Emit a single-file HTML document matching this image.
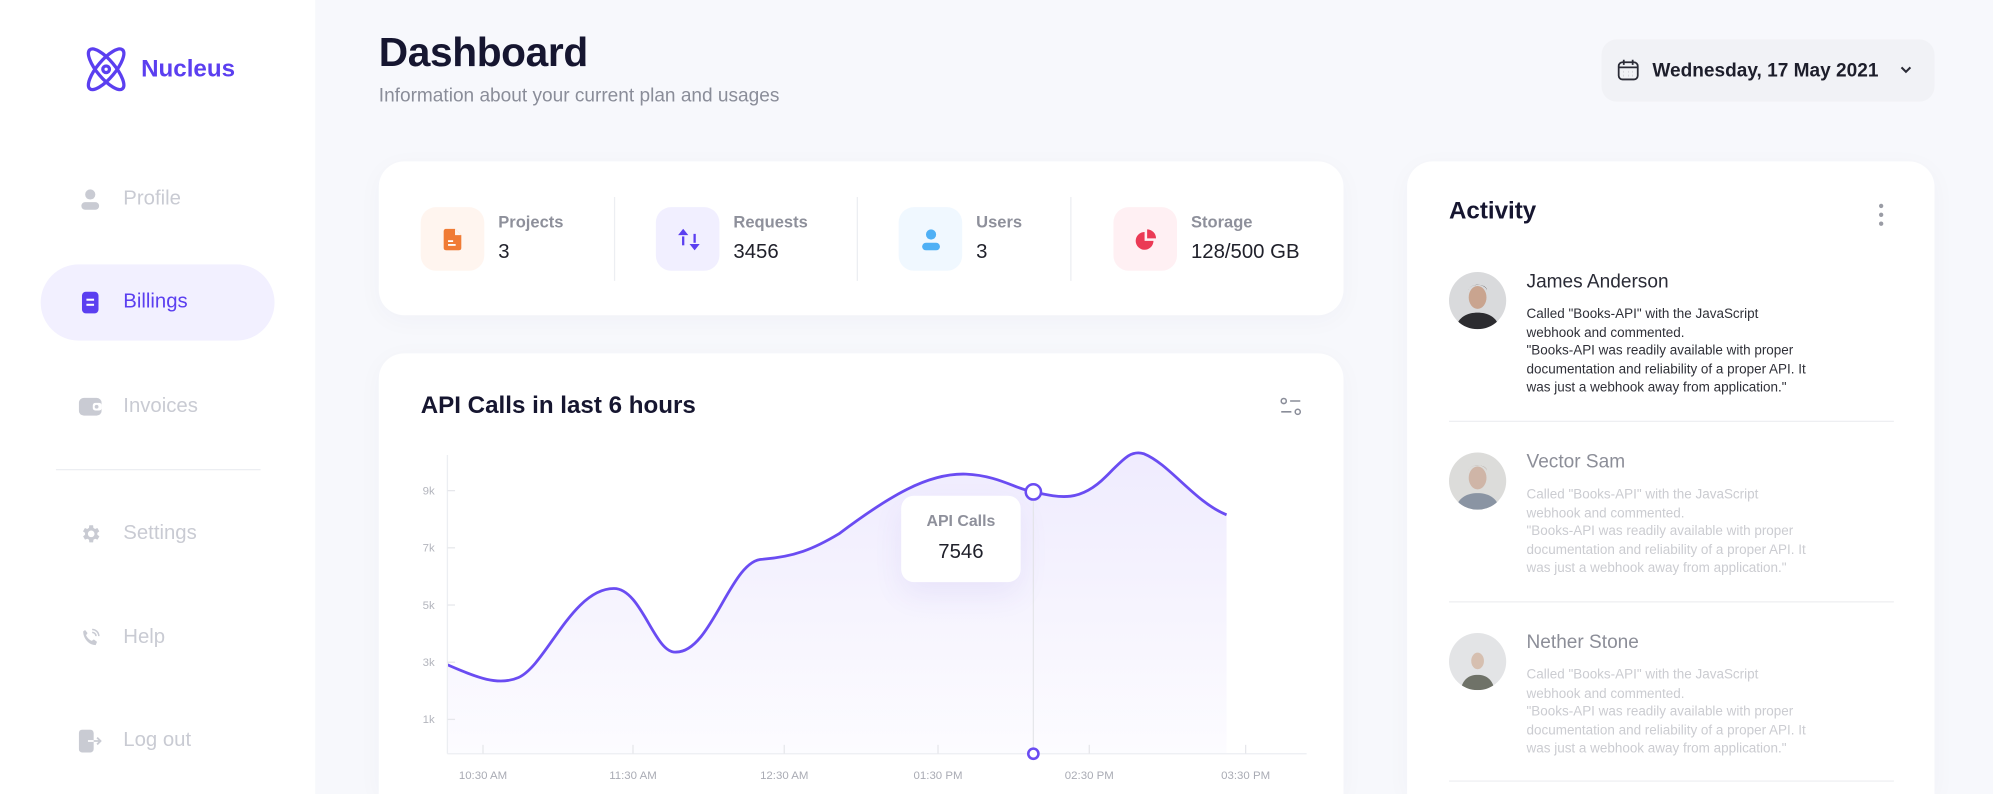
<!DOCTYPE html>
<html><head><meta charset="utf-8">
<style>
html,body{margin:0;padding:0;width:1993px;height:794px;overflow:hidden;background:#f7f8fc;font-family:"Liberation Sans",sans-serif;}
#w{position:absolute;left:0;top:0;width:1568px;height:625px;overflow:hidden;transform:scale(1.27105);transform-origin:0 0;background:#f7f8fc;}
.a{position:absolute;}
.side{left:0;top:0;width:248px;height:625px;background:#fff;}
.nav{position:absolute;left:97px;font-size:16px;color:#c9cbd3;transform:translateY(-50%);}
.ni{position:absolute;left:62px;width:18px;height:18px;transform:translateY(-50%);}
.card{position:absolute;background:#fff;border-radius:20px;box-shadow:0 4px 20px rgba(40,40,90,0.03);}
.lbl{position:absolute;font-size:13px;font-weight:bold;color:#8e909b;}
.val{position:absolute;font-size:16px;color:#20212b;}
.box{position:absolute;width:50px;height:50px;border-radius:12px;top:163px;}
.dv{position:absolute;width:1px;top:155px;height:66px;background:#eceef2;}
.yl{position:absolute;font-size:9px;color:#b3b5bd;right:1226px;transform:translateY(-50%);}
.xl{position:absolute;font-size:9px;color:#a9abb4;top:605px;transform:translateX(-50%);}
.nm{position:absolute;left:1201px;font-size:15px;color:#2a2b36;}
.tx{position:absolute;left:1201px;width:300px;font-size:10.6px;line-height:14.5px;color:#2f3038;white-space:nowrap;}
.fade{color:#cbccd1;}
.nmf{color:#8c8e98;}
.hr{position:absolute;left:1140px;width:350px;height:1px;background:#eeeff2;}
.av{position:absolute;left:1140px;width:45px;height:45px;border-radius:50%;overflow:hidden;}
</style></head><body>
<div id="w">
<div class="a side"></div>
<svg class="a" style="left:66px;top:37px" width="35" height="35" viewBox="0 0 35 35" fill="none" stroke="#5b3ff0" stroke-width="2.6">
<ellipse cx="17.5" cy="17.5" rx="7" ry="20" transform="rotate(-40 17.5 17.5)"/>
<ellipse cx="17.5" cy="17.5" rx="7" ry="20" transform="rotate(40 17.5 17.5)"/>
<circle cx="17.5" cy="17.5" r="2.6"/>
</svg>
<div class="a" style="left:111px;top:44px;font-size:19px;font-weight:bold;color:#5b3ff0">Nucleus</div>

<svg class="ni" style="top:157px" viewBox="0 0 18 18"><circle cx="9" cy="5" r="4" fill="#c9cbd3"/><rect x="2" y="11" width="14" height="6" rx="3" fill="#c9cbd3"/></svg>
<div class="nav" style="top:157px">Profile</div>
<div class="a" style="left:32px;top:208px;width:184px;height:60px;border-radius:30px;background:#f2f0ff"></div>
<svg class="ni" style="top:238px" viewBox="0 0 18 18"><rect x="2.5" y="0.5" width="13" height="17" rx="3" fill="#5b3ff0"/><rect x="6" y="6" width="6" height="1.6" fill="#fff"/><rect x="6" y="10" width="6" height="1.6" fill="#fff"/></svg>
<div class="nav" style="top:238px;color:#5b3ff0">Billings</div>
<svg class="ni" style="top:320px" viewBox="0 0 18 18"><rect x="0" y="2" width="18" height="14" rx="4" fill="#c9cbd3"/><rect x="11" y="6" width="7" height="6" rx="2" fill="#fff"/><circle cx="14" cy="9" r="1.5" fill="#c9cbd3"/></svg>
<div class="nav" style="top:320px">Invoices</div>
<div class="a" style="left:44px;top:369px;width:161px;height:1px;background:#eceef2"></div>
<svg class="ni" style="top:420px" viewBox="0 0 24 24"><path fill="#c9cbd3" d="M19.4 13a7.5 7.5 0 000-2l2.1-1.6-2-3.5-2.5 1a7.6 7.6 0 00-1.7-1L15 3h-4l-.4 2.9a7.6 7.6 0 00-1.7 1l-2.5-1-2 3.5L6.6 11a7.5 7.5 0 000 2l-2.1 1.6 2 3.5 2.5-1c.5.4 1.1.7 1.7 1L11 21h4l.4-2.9c.6-.3 1.2-.6 1.7-1l2.5 1 2-3.5zM13 15.5A3.5 3.5 0 1113 8.5a3.5 3.5 0 010 7z"/></svg>
<div class="nav" style="top:420px">Settings</div>
<svg class="ni" style="top:502px" viewBox="0 0 24 24"><path fill="#c9cbd3" d="M6.6 3.5l2.6 3.3-1.6 2.2a12 12 0 006 6l2.2-1.6 3.3 2.6-1.4 3.4C11 19.4 4.6 13 4.6 5z"/><path d="M14 3a7 7 0 017 7M14 6a4 4 0 014 4" stroke="#c9cbd3" stroke-width="1.6" fill="none"/></svg>
<div class="nav" style="top:502px">Help</div>
<svg class="ni" style="top:583px" viewBox="0 0 20 20"><rect x="0" y="0" width="13" height="20" rx="3" fill="#c9cbd3"/><path d="M8 10h11M16 7l3 3-3 3" stroke="#c9cbd3" stroke-width="1.6" fill="none"/><path d="M8 10h5" stroke="#fff" stroke-width="1.6"/></svg>
<div class="nav" style="top:583px">Log out</div>

<div class="a" style="left:298px;top:23px;font-size:32px;font-weight:bold;color:#161630;letter-spacing:-0.3px">Dashboard</div>
<div class="a" style="left:298px;top:67px;font-size:15px;color:#8a8d99">Information about your current plan and usages</div>
<div class="a" style="left:1260px;top:31px;width:262px;height:49px;border-radius:12px;background:#f1f2f6"></div>
<svg class="a" style="left:1272px;top:46px" width="18" height="18" viewBox="0 0 18 18" fill="none" stroke="#2a2b36" stroke-width="1.4"><rect x="1.5" y="3" width="15" height="13.5" rx="3"/><path d="M5.5 1v4M12.5 1v4M1.5 7h15"/><path d="M5.5 10.5h.1M9 10.5h.1M12.5 10.5h.1M5.5 13.5h.1M9 13.5h.1M12.5 13.5h.1" stroke-width="1.5"/></svg>
<div class="a" style="left:1300px;top:47px;font-size:15px;font-weight:bold;color:#1d1e2b">Wednesday, 17 May 2021</div>
<svg class="a" style="left:1494px;top:51px" width="11" height="8" viewBox="0 0 11 8"><path d="M2 2l3.5 3.5L9 2" stroke="#2a2b36" stroke-width="1.6" fill="none"/></svg>

<div class="card" style="left:298px;top:127px;width:759px;height:121px"></div>
<div class="box" style="left:331px;background:#fff5ef"></div>
<svg class="a" style="left:349px;top:180px" width="14" height="17" viewBox="0 0 14 17"><path d="M2 0h7l5 5v10a2 2 0 01-2 2H2a2 2 0 01-2-2V2a2 2 0 012-2z" fill="#f07b35"/><path d="M9 0v5h5" fill="#fff5ef"/><rect x="3.5" y="9" width="4" height="1.4" fill="#fff"/><rect x="3.5" y="12" width="6" height="1.4" fill="#fff"/></svg>
<div class="lbl" style="left:392px;top:167px">Projects</div><div class="val" style="left:392px;top:190px">3</div>
<div class="dv" style="left:483px"></div>
<div class="box" style="left:516px;background:#f1efff"></div>
<svg class="a" style="left:533px;top:180px" width="18" height="17" viewBox="0 0 18 17" fill="#5b3ff0"><path d="M4.5 0l4 5h-8z"/><rect x="3.6" y="6" width="1.8" height="7"/><path d="M13.5 17l4-5h-8z"/><rect x="12.6" y="4" width="1.8" height="7"/></svg>
<div class="lbl" style="left:577px;top:167px">Requests</div><div class="val" style="left:577px;top:190px">3456</div>
<div class="dv" style="left:674px"></div>
<div class="box" style="left:707px;background:#f0f8ff"></div>
<svg class="a" style="left:724px;top:180px" width="17" height="17" viewBox="0 0 17 17" fill="#4fb0f5"><circle cx="8.5" cy="4.5" r="4"/><rect x="1.5" y="11" width="14" height="6" rx="3"/></svg>
<div class="lbl" style="left:768px;top:167px">Users</div><div class="val" style="left:768px;top:190px">3</div>
<div class="dv" style="left:842px"></div>
<div class="box" style="left:876px;background:#fff0f3"></div>
<svg class="a" style="left:893px;top:180px" width="17" height="17" viewBox="0 0 17 17" fill="#eb3a55"><path d="M7.5 2.5A7 7 0 1014.5 9.5H7.5z"/><path d="M9.5 0.5A7 7 0 0116.5 7.5H9.5z"/></svg>
<div class="lbl" style="left:937px;top:167px">Storage</div><div class="val" style="left:937px;top:190px">128/500 GB</div>

<div class="card" style="left:298px;top:278px;width:759px;height:347px;border-radius:20px 20px 0 0"></div>
<div class="a" style="left:331px;top:309px;font-size:19px;font-weight:bold;color:#161630">API Calls in last 6 hours</div>
<svg class="a" style="left:1007px;top:312px" width="17" height="16" viewBox="0 0 17 16" fill="none" stroke="#8a8d99" stroke-width="1.2"><circle cx="3" cy="3.5" r="2"/><path d="M8 3.5h8M1 12h8"/><circle cx="14" cy="12" r="2"/></svg>
<svg class="a" style="left:0;top:0" width="1568" height="625" viewBox="0 0 1568 625">
<defs><linearGradient id="g" x1="0" y1="0" x2="0" y2="1"><stop offset="0" stop-color="#7a5cf5" stop-opacity="0.12"/><stop offset="1" stop-color="#7a5cf5" stop-opacity="0.02"/></linearGradient></defs>
<path d="M352 523 C375 533,392 540,408 533 C430 523,450 463,483 463 C505 463,515 515,532 513 C560 513,575 440,600 440 C625 438,640 432,660 420 C700 390,730 372,760 373 C785 374,800 385,813 387 C835 392,850 395,870 375 C885 360,890 354,900 357 C920 365,940 395,965 405 L965 593 L352 593 Z" fill="url(#g)"/>
<path d="M352 523 C375 533,392 540,408 533 C430 523,450 463,483 463 C505 463,515 515,532 513 C560 513,575 440,600 440 C625 438,640 432,660 420 C700 390,730 372,760 373 C785 374,800 385,813 387 C835 392,850 395,870 375 C885 360,890 354,900 357 C920 365,940 395,965 405" fill="none" stroke="#6a4cf2" stroke-width="2.2"/>
<line x1="352" y1="358" x2="352" y2="593" stroke="#eceef2"/>
<line x1="352" y1="593" x2="1028" y2="593" stroke="#eceef2"/>
<g stroke="#e6e7eb"><line x1="380" y1="586" x2="380" y2="593"/><line x1="498" y1="586" x2="498" y2="593"/><line x1="617" y1="586" x2="617" y2="593"/><line x1="738" y1="586" x2="738" y2="593"/><line x1="857" y1="586" x2="857" y2="593"/><line x1="980" y1="586" x2="980" y2="593"/>
<line x1="352" y1="386" x2="358" y2="386"/><line x1="352" y1="431" x2="358" y2="431"/><line x1="352" y1="476" x2="358" y2="476"/><line x1="352" y1="521" x2="358" y2="521"/><line x1="352" y1="566" x2="358" y2="566"/></g>
<line x1="813" y1="387" x2="813" y2="593" stroke="#e6e7eb"/>
<circle cx="813" cy="387" r="6" fill="#fff" stroke="#6a4cf2" stroke-width="2"/>
<circle cx="813" cy="593" r="4" fill="#fff" stroke="#6a4cf2" stroke-width="2"/>
</svg>
<div class="yl" style="top:386px">9k</div><div class="yl" style="top:431px">7k</div><div class="yl" style="top:476px">5k</div><div class="yl" style="top:521px">3k</div><div class="yl" style="top:566px">1k</div>
<div class="xl" style="left:380px">10:30 AM</div><div class="xl" style="left:498px">11:30 AM</div><div class="xl" style="left:617px">12:30 AM</div><div class="xl" style="left:738px">01:30 PM</div><div class="xl" style="left:857px">02:30 PM</div><div class="xl" style="left:980px">03:30 PM</div>
<div class="a" style="left:709px;top:390px;width:94px;height:68px;border-radius:10px;background:#fff;box-shadow:0 10px 24px rgba(90,70,200,0.08)"></div>
<div class="a" style="left:709px;top:403px;width:94px;text-align:center;font-size:12.5px;font-weight:bold;color:#8e909b">API Calls</div>
<div class="a" style="left:709px;top:426px;width:94px;text-align:center;font-size:16px;color:#20212b">7546</div>

<div class="card" style="left:1107px;top:127px;width:415px;height:498px;border-radius:20px 20px 0 0"></div>
<div class="a" style="left:1140px;top:156px;font-size:19px;font-weight:bold;color:#161630">Activity</div>
<svg class="a" style="left:1476px;top:159px" width="8" height="20" viewBox="0 0 8 20" fill="#9a9ca5"><circle cx="4" cy="3" r="1.7"/><circle cx="4" cy="10" r="1.7"/><circle cx="4" cy="17" r="1.7"/></svg>

<div class="av" style="top:214px;background:#d9dadc"><svg width="45" height="45" viewBox="0 0 45 45"><ellipse cx="22.5" cy="20" rx="7" ry="9" fill="#c9a48f"/><path d="M15 15c0-6 15-7 15 0 0-3-4-5-7.5-5S15 12 15 15z" fill="#2a2220"/><path d="M5 45c2-10 10-13 17.5-13S38 35 40 45z" fill="#2c2c30"/></svg></div>
<div class="nm" style="top:213px">James Anderson</div>
<div class="tx" style="top:240px">Called "Books-API" with the JavaScript<br>webhook and commented.<br>"Books-API was readily available with proper<br>documentation and reliability of a proper API. It<br>was just a webhook away from application."</div>
<div class="hr" style="top:331px"></div>

<div class="av" style="top:356px;background:#dcdcda"><svg width="45" height="45" viewBox="0 0 45 45"><ellipse cx="22.5" cy="20" rx="7" ry="9" fill="#cfb5a7"/><path d="M15 15c0-6 15-7 15 0 0-3-4-5-7.5-5S15 12 15 15z" fill="#9a8a80"/><path d="M5 45c2-10 10-13 17.5-13S38 35 40 45z" fill="#8a94a3"/></svg></div>
<div class="nm nmf" style="top:355px">Vector Sam</div>
<div class="tx fade" style="top:382px">Called "Books-API" with the JavaScript<br>webhook and commented.<br>"Books-API was readily available with proper<br>documentation and reliability of a proper API. It<br>was just a webhook away from application."</div>
<div class="hr" style="top:473px"></div>

<div class="av" style="top:498px;background:#e3e4e6"><svg width="45" height="45" viewBox="0 0 45 45"><ellipse cx="22.5" cy="22" rx="5" ry="6.5" fill="#d6bfb0"/><path d="M9 45c2-9 7-12 13.5-12S34 36 36 45z" fill="#6f7268"/></svg></div>
<div class="nm nmf" style="top:497px">Nether Stone</div>
<div class="tx fade" style="top:524px">Called "Books-API" with the JavaScript<br>webhook and commented.<br>"Books-API was readily available with proper<br>documentation and reliability of a proper API. It<br>was just a webhook away from application."</div>
<div class="hr" style="top:614px"></div>
</div>
</body></html>
